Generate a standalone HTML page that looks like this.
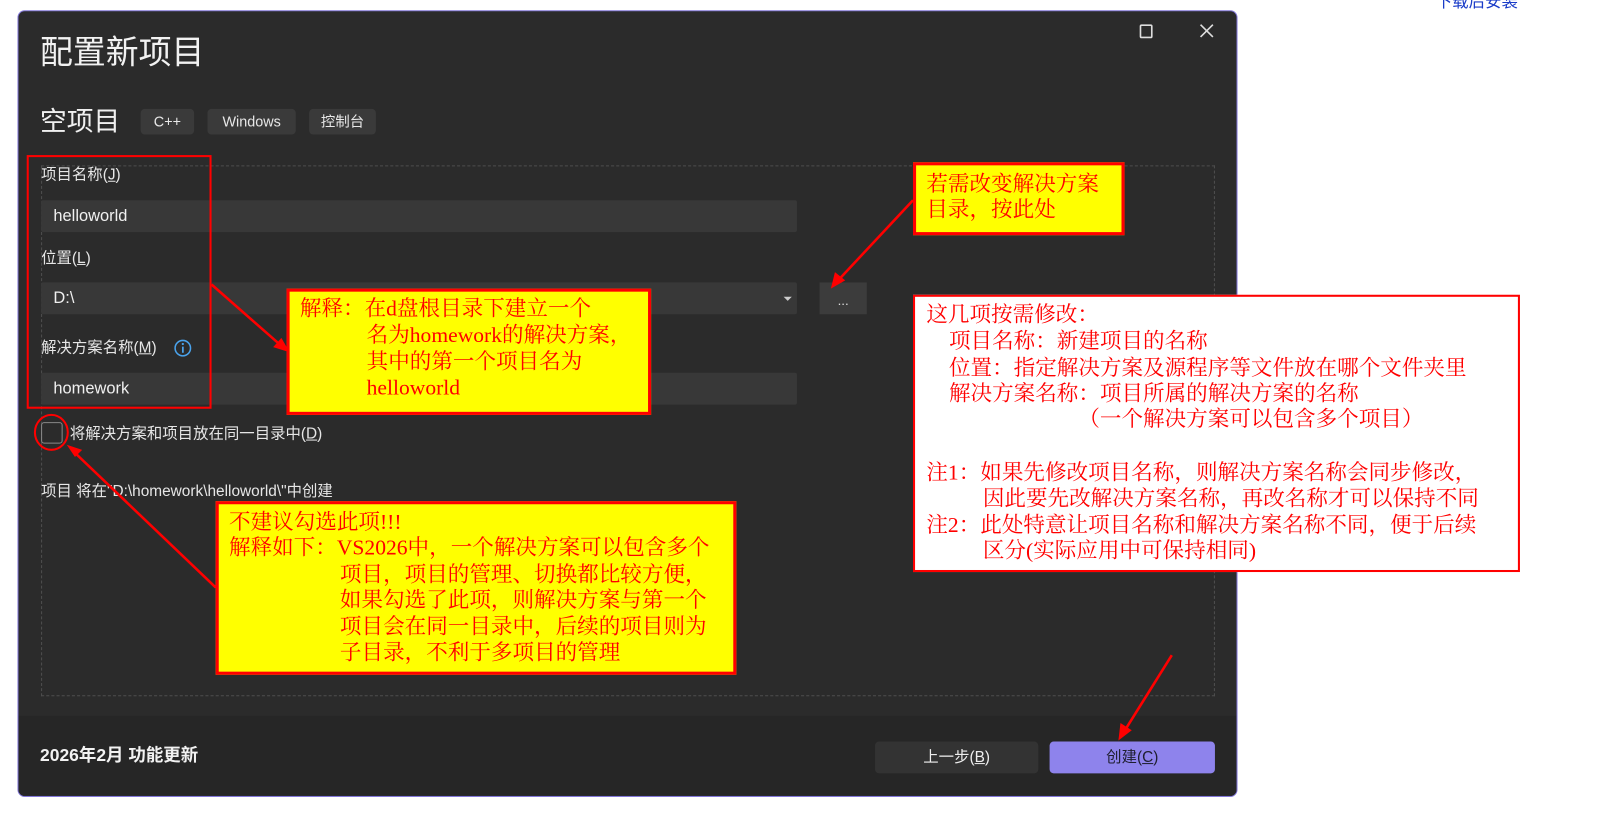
<!DOCTYPE html>
<html><head><meta charset="utf-8"><style>
html,body{margin:0;padding:0;background:#fff;width:1609px;height:819px;overflow:hidden}
#w{position:absolute;left:0;top:0;width:1567px;height:798px;transform:scale(1.027);transform-origin:0 0;font-family:"Liberation Sans","Noto Sans CJK SC",sans-serif}
.a{position:absolute;white-space:nowrap}
.dlg{position:absolute;left:17px;top:10px;width:1186px;height:764px;background:#2b2b2b;border:1px solid #8277d8;border-radius:7px;overflow:hidden}
.foot{position:absolute;left:0;right:0;bottom:0;height:78px;background:#262626}
.lbl{color:#e6e6e6;font-size:15px;line-height:20px}
.inp{position:absolute;left:40px;width:736px;height:31px;background:#383838;border-radius:2px}
.inp span{position:absolute;left:12px;top:6px;color:#f0f0f0;font-size:16px;line-height:20px}
.tag{position:absolute;top:106px;height:25px;background:#3a3a3a;border-radius:4px;color:#e8e8e8;font-size:14px;line-height:25px;text-align:center}
.y{position:absolute;background:#ffff00;border:3px solid #f00;box-sizing:border-box}
.t{position:absolute;color:#f00;font-family:"Liberation Serif","Noto Serif CJK SC",serif;font-size:21px;line-height:25px;white-space:nowrap}
</style></head><body><div id="w">
<div class="a" style="left:1398px;top:-12px;color:#1a3cc8;font-size:16px">下载后安装</div>
<div class="dlg"><div class="foot"></div></div>
<div class="a" style="left:39px;top:31px;color:#f2f2f2;font-size:32px;line-height:40px">配置新项目</div>
<svg class="a" style="left:1108px;top:22px" width="80" height="18"><rect x="2.5" y="2.5" width="11" height="12" fill="none" stroke="#ddd" stroke-width="1.6" rx="1"/><path d="M61 2 L73 14 M73 2 L61 14" stroke="#ddd" stroke-width="1.6"/></svg>
<div class="a" style="left:39px;top:101px;color:#f0f0f0;font-size:26px;line-height:34px">空项目</div>
<div class="tag" style="left:137px;width:52px">C++</div>
<div class="tag" style="left:202px;width:86px">Windows</div>
<div class="tag" style="left:301px;width:65px">控制台</div>
<div class="a" style="left:40px;top:161px;width:1141px;height:515px;border:1px dashed #4e4e4e"></div>
<div class="a lbl" style="left:40px;top:161px">项目名称(<u>J</u>)</div>
<div class="inp" style="top:195px"><span>helloworld</span></div>
<div class="a lbl" style="left:40px;top:242px">位置(<u>L</u>)</div>
<div class="inp" style="top:275px"><span>D:\</span></div>
<div class="a" style="left:763px;top:289px;border:4px solid transparent;border-top:4px solid #ccc;width:0;height:0"></div>
<div class="a" style="left:798px;top:275px;width:46px;height:31px;background:#3c3c3c;color:#ddd;font-size:13px;text-align:center;line-height:36px">...</div>
<div class="a lbl" style="left:40px;top:329px">解决方案名称(<u>M</u>)</div>
<svg class="a" style="left:169px;top:330px" width="18" height="18"><circle cx="9" cy="9" r="7.5" fill="none" stroke="#4aa3ec" stroke-width="1.5"/><rect x="8.2" y="7.5" width="1.7" height="6" fill="#4aa3ec"/><circle cx="9" cy="5" r="1.1" fill="#4aa3ec"/></svg>
<div class="inp" style="top:363px"><span>homework</span></div>
<div class="a" style="left:40px;top:411px;width:19px;height:19px;border:1px solid #888;border-radius:3px;background:#2b2b2b"></div>
<div class="a lbl" style="left:68px;top:413px">将解决方案和项目放在同一目录中(<u>D</u>)</div>
<div class="a lbl" style="left:40px;top:469px">项目 将在"D:\homework\helloworld\"中创建</div>
<div class="a" style="left:39px;top:725px;color:#f2f2f2;font-size:17px;font-weight:bold;line-height:22px">2026年2月 功能更新</div>
<div class="a" style="left:852px;top:722px;width:159px;height:31px;background:#333;border-radius:4px;color:#eee;font-size:15px;line-height:31px;text-align:center">上一步(<u>B</u>)</div>
<div class="a" style="left:1022px;top:722px;width:161px;height:31px;background:#8e83ec;border-radius:4px;color:#1e1e2e;font-size:15px;line-height:31px;text-align:center">创建(<u>C</u>)</div>

<div class="a" style="left:26px;top:151px;width:176px;height:243px;border:2px solid #f00"></div>
<div class="y" style="left:279px;top:281px;width:355px;height:123px"></div>
<div class="t" style="left:292px;top:288px">解释：在d盘根目录下建立一个</div>
<div class="t" style="left:357px;top:314px">名为homework的解决方案，</div>
<div class="t" style="left:357px;top:340px">其中的第一个项目名为</div>
<div class="t" style="left:357px;top:365px">helloworld</div>
<div class="y" style="left:889px;top:158px;width:206px;height:71px"></div>
<div class="t" style="left:902px;top:167px">若需改变解决方案</div>
<div class="t" style="left:902px;top:192px">目录，按此处</div>
<div class="a" style="left:889px;top:287px;width:591px;height:270px;background:#fff;border:2px solid #f00;box-sizing:border-box"></div>
<div class="t" style="left:902px;top:294px">这几项按需修改：</div>
<div class="t" style="left:924px;top:320px">项目名称：新建项目的名称</div>
<div class="t" style="left:924px;top:346px">位置：指定解决方案及源程序等文件放在哪个文件夹里</div>
<div class="t" style="left:924px;top:371px">解决方案名称：项目所属的解决方案的名称</div>
<div class="t" style="left:1050px;top:396px">（一个解决方案可以包含多个项目）</div>
<div class="t" style="left:902px;top:448px">注1：如果先修改项目名称，则解决方案名称会同步修改，</div>
<div class="t" style="left:957px;top:473px">因此要先改解决方案名称，再改名称才可以保持不同</div>
<div class="t" style="left:902px;top:499px">注2：此处特意让项目名称和解决方案名称不同，便于后续</div>
<div class="t" style="left:957px;top:524px">区分(实际应用中可保持相同)</div>
<div class="y" style="left:210px;top:488px;width:507px;height:169px"></div>
<div class="t" style="left:223px;top:496px">不建议勾选此项!!!</div>
<div class="t" style="left:223px;top:521px">解释如下：VS2026中，一个解决方案可以包含多个</div>
<div class="t" style="left:331px;top:547px">项目，项目的管理、切换都比较方便，</div>
<div class="t" style="left:331px;top:572px">如果勾选了此项，则解决方案与第一个</div>
<div class="t" style="left:331px;top:598px">项目会在同一目录中，后续的项目则为</div>
<div class="t" style="left:331px;top:623px">子目录，不利于多项目的管理</div>
<svg class="a" style="left:0;top:0" width="1567" height="798">
<ellipse cx="50" cy="421" rx="16" ry="17" fill="none" stroke="#f00" stroke-width="2"/>
<g stroke="#f00" stroke-width="2.5" fill="#f00">
<line x1="206" y1="277" x2="272" y2="335"/><polygon points="282,343 266,338 274,329" stroke="none"/>
<line x1="889" y1="195" x2="817" y2="272"/><polygon points="809,281 813,265 823,273" stroke="none"/>
<line x1="210" y1="572" x2="72" y2="440"/><polygon points="65,433 80,438 73,445" stroke="none" />
<line x1="1141" y1="638" x2="1096" y2="710"/><polygon points="1089,721 1091,704 1102,711" stroke="none"/>
</g></svg>
</div></body></html>
